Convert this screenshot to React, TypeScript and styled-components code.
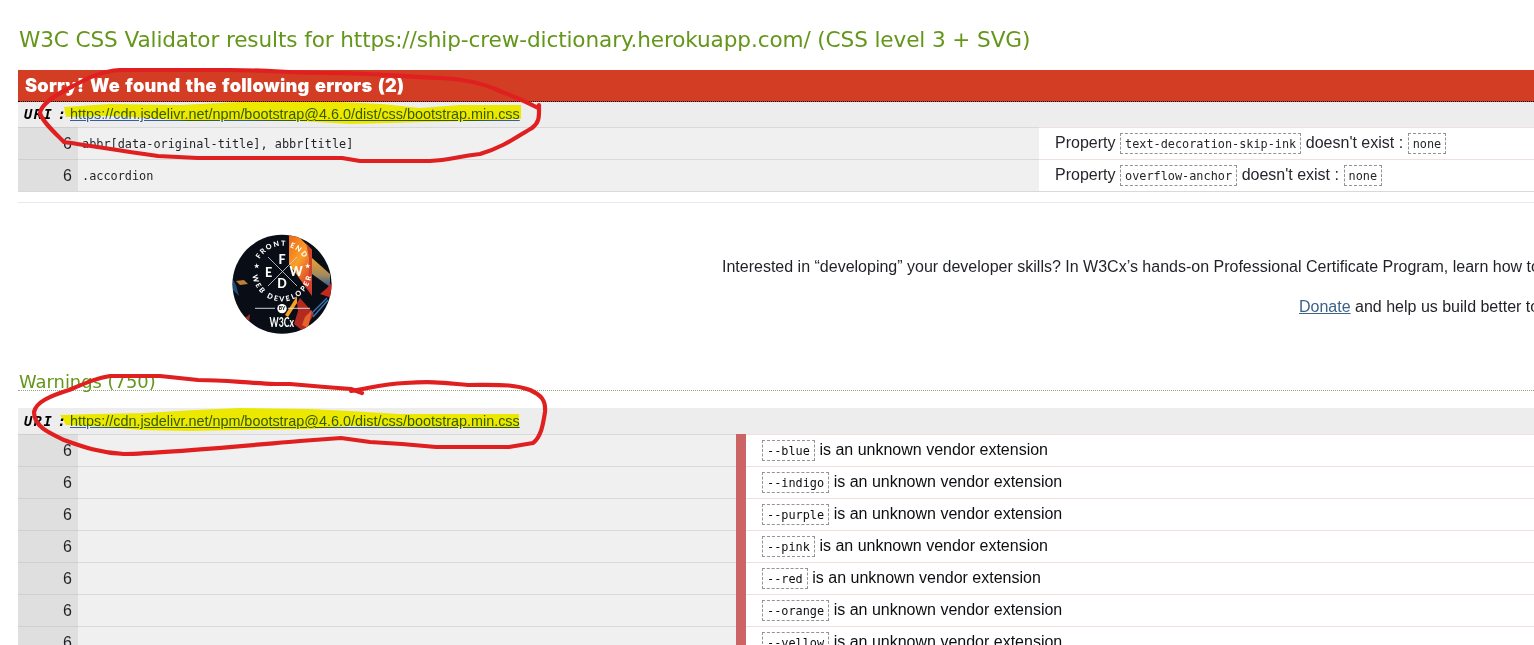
import React from 'react';
import styled, { createGlobalStyle } from 'styled-components';

const GlobalStyle = createGlobalStyle`
  html, body { margin: 0; padding: 0; background: #fff; }
  body { height: 645px; overflow: hidden; color: #1f2126; font: 16px/20px "Liberation Sans", Arial, sans-serif; }
`;

const Page = styled.main`
  position: relative;
  width: 1534px;
  height: 645px;
  overflow: hidden;
  padding-left: 18px;
  box-sizing: border-box;
`;

const Title = styled.h2`
  margin: 0;
  height: 70px;
  padding-top: 25px;
  box-sizing: border-box;
  color: #64961a;
  font: 400 21.6px/30px "DejaVu Sans", Verdana, sans-serif;
  letter-spacing: -0.12px;
  text-indent: 1px;
  white-space: nowrap;
`;

const ErrorHeader = styled.h3`
  margin: 0;
  height: 32px;
  padding-left: 7px;
  box-sizing: border-box;
  border-bottom: 1px dotted #000;
  background: #d23d24;
  color: #fff;
  font: 900 18.2px/31px Inter, "Arial Black", sans-serif;
  letter-spacing: 0.2px;
  word-spacing: 1.6px;
  white-space: nowrap;
`;

const WarningHeader = styled.h3`
  margin: 0 0 17px;
  height: 20px;
  border-bottom: 1px dotted #99a67c;
  color: #64961a;
  font: 400 17.9px/23px "DejaVu Sans", Verdana, sans-serif;
  text-indent: 1px;
`;

const UriBar = styled.div<{ $h: number }>`
  display: flex;
  align-items: flex-start;
  height: ${p => p.$h}px;
  padding: ${p => p.$h - 22}px 0 0 6px;
  box-sizing: border-box;
  background: #ededed;
`;

const UriLabel = styled.span`
  width: 46px;
  color: #000;
  font: italic 700 13.8px/19px "DejaVu Sans Mono", monospace;
  letter-spacing: 1.4px;
  word-spacing: -5px;
  white-space: nowrap;
`;

const UriLink = styled.a`
  color: #365d95;
  font-size: 14.4px;
  line-height: 19px;
  text-decoration: underline;
`;

const Row = styled.div`
  display: flex;
  height: 32px;
`;

const LineNo = styled.div`
  width: 60px;
  padding: 6px 6px 0 0;
  box-sizing: border-box;
  border-top: 1px solid #cfcfcf;
  background: #dfdfdf;
  text-align: right;
`;

const Context = styled.div<{ $w: number }>`
  width: ${p => p.$w}px;
  padding: 6px 0 0 4px;
  box-sizing: border-box;
  border-top: 1px solid #d9d9d9;
  background: #f0f0f0;
  font: 11.87px/20px "DejaVu Sans Mono", monospace;
`;

const Message = styled.div<{ $level?: boolean }>`
  flex: 1;
  display: flex;
  align-items: flex-start;
  gap: 4.6px;
  padding: 5px 0 0 16px;
  border-top: 1px solid #f3dede;
  white-space: nowrap;
  color: ${p => (p.$level ? '#0c0e12' : '#25272d')};
`;

const LevelBar = styled.div`
  width: 10px;
  background: #cc6466;
`;

const Code = styled.code`
  height: 21px;
  box-sizing: border-box;
  padding: 0 4px;
  border: 1px dashed #949494;
  font: 11.85px/21px "DejaVu Sans Mono", monospace;
`;

const ErrorRows = styled.div`
  border-bottom: 1px solid #d9d9d9;
`;

const Promo = styled.section`
  display: flex;
  margin-top: 10px;
  height: 167px;
  border-top: 1px solid #e8e8f5;
`;

const Badge = styled.svg`
  flex: none;
  width: 100px;
  height: 100px;
  margin: 31px 390px 0 214px;
`;

const PromoText = styled.div`
  display: flex;
  flex-direction: column;
  gap: 20px;
  padding-top: 54px;
  white-space: nowrap;
`;

const DonateLine = styled.div`
  padding-left: 577px;
  a { color: #3c6288; text-decoration: underline; }
`;

const Ink = styled.svg`
  position: absolute;
  left: 0;
  top: 0;
  pointer-events: none;
`;

const Highlighter = styled(Ink)`
  mix-blend-mode: multiply;
`;

const uri = 'https://cdn.jsdelivr.net/npm/bootstrap@4.6.0/dist/css/bootstrap.min.css';

const errors = [
  { context: 'abbr[data-original-title], abbr[title]', property: 'text-decoration-skip-ink' },
  { context: '.accordion', property: 'overflow-anchor' },
];

const warnings = ['--blue', '--indigo', '--purple', '--pink', '--red', '--orange', '--yellow'];

const Uri = ({ h }: { h: number }) => (
  <UriBar $h={h}>
    <UriLabel>URI :</UriLabel>
    <UriLink>{uri}</UriLink>
  </UriBar>
);

const CourseBadge = () => (
  <Badge viewBox="0 0 100 100">
    <defs>
      <clipPath id="disc"><circle cx="50" cy="50.3" r="49.5" /></clipPath>
      <linearGradient id="flame" x1="0" y1="0" x2=".6" y2="1">
        <stop offset="0" stopColor="#ee6412" />
        <stop offset=".5" stopColor="#f9a02a" />
        <stop offset="1" stopColor="#d8352a" />
      </linearGradient>
      <linearGradient id="dusk" x1="0" y1="0" x2="0" y2="1">
        <stop offset="0" stopColor="#f2a12b" />
        <stop offset=".6" stopColor="#a08a60" />
        <stop offset="1" stopColor="#2c5c92" />
      </linearGradient>
      <path id="topArc" d="M27.6 25A25.7 25.7 0 0 1 75 31.5" />
      <path id="bottomArc" d="M20.6 41.5A29.6 29.6 0 0 0 79.4 41" />
    </defs>
    <g clipPath="url(#disc)">
      <rect width="100" height="101" fill="#090d15" />
      <path d="M57 0V30L80 62V16L69 5V0Z" fill="url(#flame)" />
      <path d="M74 9L80 16V58L77 54V24Z" fill="#d0442a" />
      <path d="M80 24L98 40V53L80 40Z" fill="url(#dusk)" />
      <path d="M95 54L100 48V64L88 60Z" fill="#c3291e" />
      <path d="M53 81L65 62V69L56 83Z" fill="#f5a128" />
      <path d="M65 69L68 64L82 80L72 98L62 90L66 77Z" fill="#b52a20" />
      <path d="M73 83L80 76L76 94L70 91Z" fill="#e7632a" />
      <path d="M81 83L96 66M79 80L95 64" stroke="#3c75b5" strokeWidth="1.3" />
      <path d="M4 47L12 46L16 50L8 51Z" fill="#bd8130" />
      <path d="M0 44L4 51L7 62L1 56Z" fill="#244b78" />
      <path d="M12 85L18 80L17 89Z" fill="#a03028" />
    </g>
    <path d="M36 23L65 52M65 23L36 52" stroke="#d7dbe0" strokeWidth=".8" />
    <g fill="#fff" fontFamily="Lato, sans-serif" fontWeight="900">
      <g fontSize="12.5" textAnchor="middle">
        <text x="50" y="29.6">F</text>
        <text x="36.7" y="42.6">E</text>
        <text x="64" y="42.2">W</text>
        <text x="50" y="54.4">D</text>
      </g>
      <g fontSize="7.2">
        <text><textPath href="#topArc" textLength="53">FRONT END</textPath></text>
        <text><textPath href="#bottomArc" textLength="84">WEB DEVELOPER</textPath></text>
      </g>
      <g fontSize="6" textAnchor="middle">
        <text x="24.7" y="34">★</text>
        <text x="75.7" y="34">★</text>
      </g>
    </g>
    <path d="M23 74.3H43M56 74.3H78" stroke="#e5e5e5" strokeWidth=".9" />
    <circle cx="50" cy="74.6" r="4.7" fill="#fff" />
    <text x="50" y="76.4" textAnchor="middle" fontFamily="Lato" fontWeight="900" fontSize="5" fill="#111">BY</text>
    <text x="37.5" y="93" textLength="24.5" lengthAdjust="spacingAndGlyphs" fontFamily="Lato" fontWeight="700" fontSize="13.5" fill="#fff">W3Cx</text>
  </Badge>
);

export default function App() {
  return (
    <Page>
      <GlobalStyle />
      <Title>W3C CSS Validator results for https://ship-crew-dictionary.herokuapp.com/ (CSS level 3 + SVG)</Title>
      <ErrorHeader>Sorry! We found the following errors (2)</ErrorHeader>
      <Uri h={25} />
      <ErrorRows>
        {errors.map(e => (
          <Row key={e.property}>
            <LineNo>6</LineNo>
            <Context $w={961}>{e.context}</Context>
            <Message>
              <span>Property</span>
              <Code>{e.property}</Code>
              <span>doesn't exist :</span>
              <Code>none</Code>
            </Message>
          </Row>
        ))}
      </ErrorRows>
      <Promo>
        <CourseBadge />
        <PromoText>
          <div>Interested in “developing” your developer skills? In W3Cx’s hands-on Professional Certificate Program, learn how to code</div>
          <DonateLine><a>Donate</a> and help us build better tools</DonateLine>
        </PromoText>
      </Promo>
      <WarningHeader>Warnings (750)</WarningHeader>
      <Uri h={26} />
      {warnings.map(name => (
        <Row key={name}>
          <LineNo>6</LineNo>
          <Context $w={658} />
          <LevelBar />
          <Message $level>
            <Code>{name}</Code>
            <span>is an unknown vendor extension</span>
          </Message>
        </Row>
      ))}
      <Highlighter width="1534" height="645" fill="#fffa00">
        <path d="M64 107L110 104L180 105L240 102L340 102L382 104L420 108L460 105L521 105V119L470 121L424 122L390 123L350 124L300 121L240 120L190 121L150 118L110 116L66 117Z" />
        <path d="M60 415L95 414L145 413L195 410L240 408L310 409L350 411L400 414L519 414V428L400 427L350 426L310 429L240 430L190 431L140 430L110 427L66 425Z" />
      </Highlighter>
      <Ink width="1534" height="645" fill="none" stroke="#e02020" strokeWidth="4.2" strokeLinecap="round" strokeLinejoin="round">
        <path d="M539 105L538 108C525 101 515 97 500 91C485 84 465 79 440 78C400 77 380 73 330 73C290 73 270 70 230 70H120C102 71 88 78 73 86C55 95 41 105 40 113C42 121 53 131 64 142C91 146 105 148 130 152L158 156L198 158H342L360 161H430C450 160 455 157 480 154C504 147 518 136 532 128C540 122 539 116 539 105Z" />
        <path d="M362 393L351 389L325 387L290 384H275C245 383 225 380 198 380L160 376H110C97 378 88 382 69 390C50 396 36 402 34 412C34 426 47 432 64 440C83 447 101 453 124 454C165 453 230 447 300 441L341 438L370 442L402 444L436 447H509L533 443C541 437 543 425 545 412C546 400 541 395 530 390C514 384 500 385 468 385C445 383 435 381 405 383C384 384 370 388 351 391" />
      </Ink>
    </Page>
  );
}
